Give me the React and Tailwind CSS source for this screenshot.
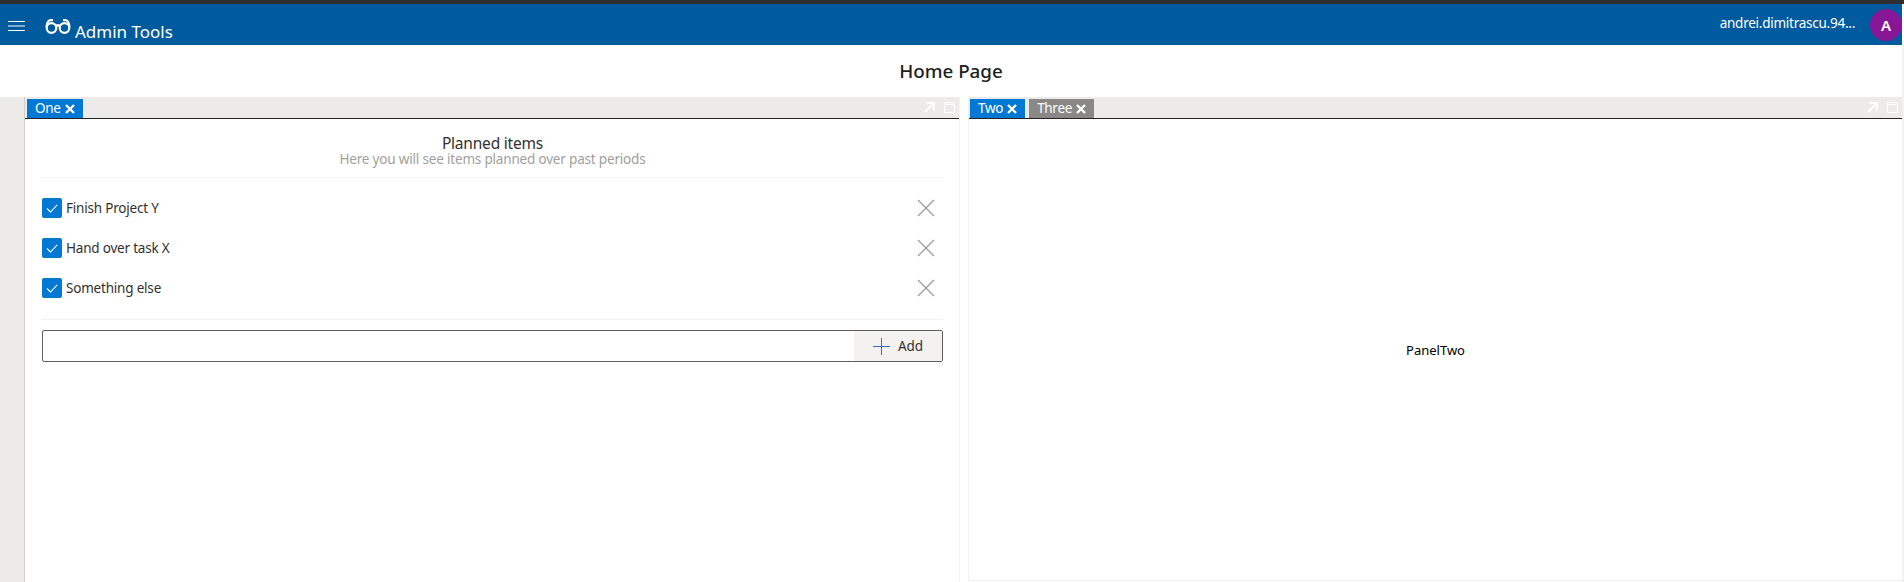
import React from "react";

function TabX() {
  return (
    <svg width="10" height="10" viewBox="0 0 10 10" className="ml-[4px]">
      <path d="M1 1 L9 9 M9 1 L1 9" stroke="#fff" strokeWidth="2.4" fill="none" />
    </svg>
  );
}

function Tab({ label, active }) {
  return (
    <div className={`h-[19px] flex items-center pl-2 pr-[8px] text-[13.5px] leading-none tracking-[-0.3px] text-[#ffffff] mr-1 ${active ? "bg-[#0078d4]" : "bg-[#8a8886]"}`}>
      <span>{label}</span>
      <TabX />
    </div>
  );
}

function StripIcons() {
  return (
    <div className="ml-auto self-center flex items-center gap-[9px] pr-[4px]">
      <svg width="11" height="11" viewBox="0 0 11 11">
        <path d="M1 10 L9.5 1.5 M2.5 1 H10 V8.5" stroke="#fff" strokeWidth="2" fill="none" />
      </svg>
      <svg width="11" height="11" viewBox="0 0 11 11">
        <path d="M0.5 0.5 H10.5 V10.5 H0.5 Z M0.5 2.5 H10.5" stroke="#fff" strokeWidth="1" fill="none" />
      </svg>
    </div>
  );
}

function TabStrip({ children, inset }) {
  return (
    <div className={`h-[22px] shrink-0 bg-[#edebe9] border-b-[1px] border-[#252423] flex items-end ${inset ? "pl-[1px]" : "pl-[2px]"}`}>
      {children}
      <StripIcons />
    </div>
  );
}

function Row({ label }) {
  return (
    <div className="h-10 flex items-center">
      <div className="w-5 h-5 bg-[#0078d4] rounded-[2px] flex items-center justify-center">
        <svg width="14" height="14" viewBox="0 0 14 14">
          <path d="M2 7.5 L5.5 11 L12.2 3.8" stroke="#fff" strokeWidth="1.1" fill="none" />
        </svg>
      </div>
      <span className="ml-1 text-[13.5px] tracking-[-0.2px] text-[#323130]">{label}</span>
      <svg width="18" height="18" viewBox="0 0 18 18" className="ml-auto mr-[8px]">
        <path d="M1 1 L17 17 M17 1 L1 17" stroke="#a19f9d" strokeWidth="1.4" fill="none" />
      </svg>
    </div>
  );
}

export default function App() {
  return (
    <div className="w-[1904px] h-[582px] overflow-hidden bg-white flex flex-col font-['Noto_Sans','Open_Sans',sans-serif]">
      <div className="h-[4px] shrink-0 bg-[#2e2e2e]" />
      <div className="flex-1 min-h-0 flex">
        <div className="w-[1902px] shrink-0 flex flex-col">
          <header className="h-[41px] shrink-0 bg-[#005a9e] flex items-center text-white">
            <svg width="17" height="12" viewBox="0 0 17 12" className="ml-2 mt-[2px]">
              <path d="M0 1.5 H17 M0 6 H17 M0 10.5 H17" stroke="#fff" strokeWidth="1" />
            </svg>
            <svg width="26" height="15" viewBox="0 0 26 15" className="ml-[20px] mt-[3px]">
              <g stroke="#fff" strokeWidth="2.2" fill="none">
                <circle cx="6.5" cy="9" r="4.8" />
                <circle cx="19.5" cy="9" r="4.8" />
                <path d="M11 7 Q13 5.5 15 7" />
                <path d="M1.5 8 Q2 2 5 1.2 H8" />
                <path d="M24.5 8 Q24 2 21 1.2 H18" />
              </g>
            </svg>
            <span className="ml-[4px] text-[17px] mt-[15px]">Admin Tools</span>
            <span className="ml-auto text-[13.5px] tracking-[-0.25px] -mt-[2px]">andrei.dimitrascu.94...</span>
            <div className="ml-[15px] mt-[1px] w-8 h-8 rounded-full bg-[#881798] flex items-center justify-center text-[15px] font-semibold">A</div>
          </header>
          <div className="h-[52px] shrink-0 flex items-center justify-center text-[18.8px] font-medium text-[#201f1e]">Home Page</div>
          <main className="flex-1 min-h-0 flex bg-white">
            <div className="w-[25px] shrink-0 bg-[#edebe9] border-r-[1px] border-[#d2d0ce]" />
            <section className="w-[935px] shrink-0 flex flex-col border-r-[1px] border-[#f3f2f1]">
              <TabStrip><Tab label="One" active /></TabStrip>
              <div className="flex-1 pl-[17px] pr-[16px]">
                <div className="h-[59px] border-b-[1px] border-[#f3f2f1] flex flex-col items-center pt-[16px]">
                  <div className="text-[15.5px] leading-[16px] tracking-[-0.2px] text-[#323130]">Planned items</div>
                  <div className="text-[13.5px] leading-[14px] tracking-[-0.18px] mt-[1px] text-[#a19f9d]">Here you will see items planned over past periods</div>
                </div>
                <div className="pt-[10px] pb-[11px] border-b-[1px] border-[#f3f2f1]">
                  <Row label="Finish Project Y" />
                  <Row label="Hand over task X" />
                  <Row label="Something else" />
                </div>
                <div className="mt-[10px] h-8 flex border-[1px] border-[#605e5c] rounded-[2px] overflow-hidden">
                  <input className="flex-1 min-w-0 outline-none" aria-label="New item" />
                  <div className="w-[88px] bg-[#f3f2f1] flex items-center justify-center text-[13.5px] tracking-[-0.1px] text-[#323130]">
                    <svg width="17" height="17" viewBox="0 0 17 17" className="mr-[8px]">
                      <path d="M0 8.5 H17 M8.5 0 V17" stroke="#3b6fc4" strokeWidth="1" />
                    </svg>
                    Add
                  </div>
                </div>
              </div>
            </section>
            <div className="w-[8px] shrink-0" />
            <section className="flex-1 min-w-0 flex flex-col border-l-[1px] border-b-[1px] border-[#f3f2f1] mb-[1px]">
              <TabStrip inset>
                <Tab label="Two" active />
                <Tab label="Three" />
              </TabStrip>
              <div className="flex-1 flex items-center justify-center pt-[2px] text-[13px] text-black">PanelTwo</div>
            </section>
          </main>
        </div>
        <div className="flex-1 flex flex-col">
          <div className="h-[41px] shrink-0 bg-white" />
          <div className="flex-1 bg-[#f3f2f1]" />
        </div>
      </div>
    </div>
  );
}
